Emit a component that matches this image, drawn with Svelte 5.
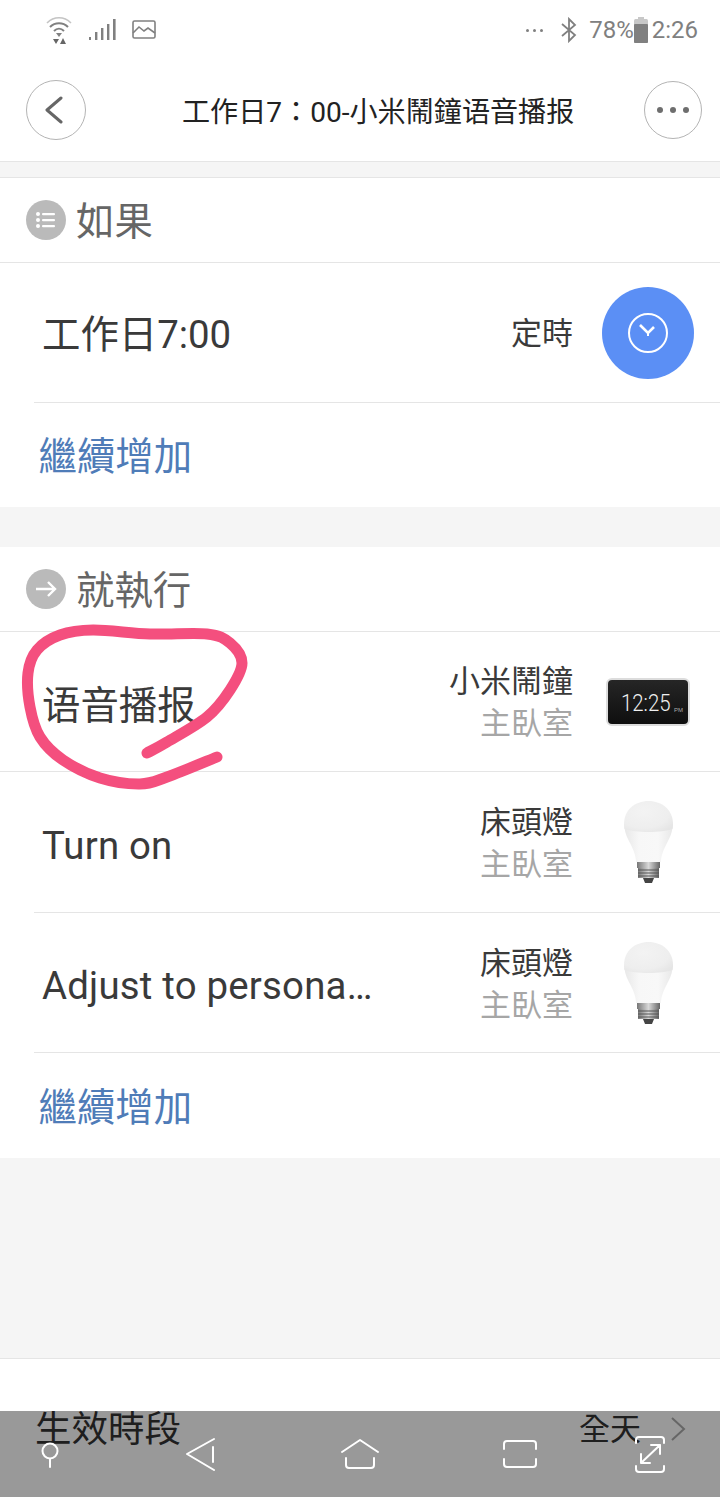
<script>
  // freehand circle drawn over the first action row
  const mark = [
    [147, 753], [167, 742], [207, 717], [230, 690], [242, 663], [230, 643], [207, 634],
    [150, 634], [93, 630], [60, 635], [37, 650], [28, 673], [30, 707], [40, 737],
    [63, 760], [100, 778], [140, 784], [167, 777], [217, 757]
  ]

  function smooth(p) {
    let d = `M${p[0][0]} ${p[0][1]}`
    for (let i = 0; i < p.length - 1; i++) {
      const a = p[Math.max(i - 1, 0)]
      const b = p[i]
      const c = p[i + 1]
      const e = p[Math.min(i + 2, p.length - 1)]
      const x1 = b[0] + (c[0] - a[0]) / 6
      const y1 = b[1] + (c[1] - a[1]) / 6
      const x2 = c[0] - (e[0] - b[0]) / 6
      const y2 = c[1] - (e[1] - b[1]) / 6
      d += ` C${x1} ${y1} ${x2} ${y2} ${c[0]} ${c[1]}`
    }
    return d
  }

  const actions = [
    { name: '语音播报', device: '小米鬧鐘', kind: 'clock' },
    { name: 'Turn on', device: '床頭燈', kind: 'bulb' },
    { name: 'Adjust to persona…', device: '床頭燈', kind: 'bulb' }
  ]
</script>

{#snippet bulb()}
  <svg class="device" width="52" height="84" viewBox="0 0 52 84">
    <defs>
      <radialGradient id="glass" cx="0.4" cy="0.35" r="0.75">
        <stop offset="0" stop-color="#f3f3f3" />
        <stop offset="0.7" stop-color="#eeeeee" />
        <stop offset="1" stop-color="#e5e5e5" />
      </radialGradient>
      <linearGradient id="neck" x1="0" x2="1" y1="0" y2="0">
        <stop offset="0" stop-color="#e8e8e8" />
        <stop offset="0.3" stop-color="#f7f7f7" />
        <stop offset="0.7" stop-color="#f8f8f8" />
        <stop offset="1" stop-color="#e8e8e8" />
      </linearGradient>
      <linearGradient id="metal" x1="0" x2="1" y1="0" y2="0">
        <stop offset="0" stop-color="#777" />
        <stop offset="0.5" stop-color="#d8d8d8" />
        <stop offset="1" stop-color="#666" />
      </linearGradient>
    </defs>
    <path d="M2.5 27 C13 32 40 32 50.5 27 C50 34 47 39 45 43 C42 49 39 55 39 62 H14 C14 55 11 49 8 43 C6 39 3 34 2.5 27 Z" fill="url(#neck)" />
    <path d="M2 24 C2 10 13 1 26.5 1 C40 1 51 10 51 24 C51 26 51 27 50.5 29 C40 33 13 33 2.5 29 C2 27 2 26 2 24 Z" fill="url(#glass)" />
    <rect x="15" y="62" width="23" height="6" fill="url(#metal)" />
    <rect x="16" y="68" width="21" height="10" fill="url(#metal)" />
    <path d="M16 70 H37 M16 73 H37 M16 76 H37" stroke="#555" stroke-width="1" />
    <path d="M21 78 H32 L30 83 H23 Z" fill="#444" />
  </svg>
{/snippet}

{#snippet clock()}
  <svg class="device" width="84" height="48" viewBox="0 0 84 48">
    <defs>
      <linearGradient id="face" x1="0" x2="0" y1="0" y2="1">
        <stop offset="0" stop-color="#262626" />
        <stop offset="1" stop-color="#0e0e0e" />
      </linearGradient>
    </defs>
    <rect x="1" y="1" width="82" height="46" rx="5" fill="url(#face)" stroke="#dcdcdc" stroke-width="2" />
    <text x="15" y="29.1" class="clock-time" transform="scale(1 1.15)">12:25</text>
    <text x="68" y="33.5" class="clock-pm">PM</text>
  </svg>
{/snippet}

<div class="page">
  <div class="top">
    <div class="status">
      <div class="status-left">
        <svg width="30" height="30" viewBox="0 0 30 30" fill="none" stroke="#808080">
          <path d="M3 8 C10 1 20 1 27 8" stroke="#c4c4c4" stroke-width="1.6" />
          <path d="M6 12 C11 7 19 7 24 12" stroke-width="2" />
          <path d="M10 16 C13 13 17 13 20 16" stroke-width="2" />
          <path d="M12 18 L18 18 L15 22 Z" fill="#808080" stroke="none" />
          <path d="M9 24 H15 L12 29 Z M16 29 H22 L19 23 Z" fill="#666" stroke="none" />
        </svg>
        <svg width="28" height="24" viewBox="0 0 28 24" fill="#808080">
          <rect x="0" y="19" width="2" height="3" />
          <rect x="6" y="14" width="2.4" height="8" />
          <rect x="12" y="10" width="2.4" height="12" />
          <rect x="18" y="6" width="2.4" height="16" />
          <rect x="24" y="1" width="2.6" height="21" />
        </svg>
        <svg width="24" height="20" viewBox="0 0 24 20" fill="none" stroke="#808080" stroke-width="1.6">
          <rect x="1" y="1" width="22" height="17" rx="1.5" />
          <path d="M1 13 L7 7 L12 11 L16 8 L23 13" />
        </svg>
      </div>
      <div class="status-right">
        <span class="dots"><i></i><i></i><i></i></span>
        <svg width="18" height="26" viewBox="0 0 18 26" fill="none" stroke="#808080" stroke-width="1.8">
          <path d="M2 7 L15 18 L9 24 V2 L15 8 L2 19" />
        </svg>
        <span class="pct">78%</span>
        <svg width="14" height="26" viewBox="0 0 14 26">
          <rect x="4" y="0" width="6" height="3" fill="#c8c8c8" />
          <rect x="0" y="2" width="14" height="24" rx="1.5" fill="#c8c8c8" />
          <rect x="0" y="7" width="14" height="19" rx="1" fill="#808080" />
        </svg>
        <span class="time">2:26</span>
      </div>
    </div>
    <header>
      <button class="round back" aria-label="back">
        <svg width="20" height="28" viewBox="0 0 20 28" fill="none" stroke="#666" stroke-width="3" stroke-linecap="round" stroke-linejoin="round">
          <path d="M17 2 L3 14 L17 26" />
        </svg>
      </button>
      <div class="title">工作日7：00-小米鬧鐘语音播报</div>
      <button class="round more" aria-label="more">
        <span></span><span></span><span></span>
      </button>
    </header>
  </div>

  <section class="first">
    <div class="head">
      <span class="badge">
        <svg width="20" height="18" viewBox="0 0 20 18" fill="#fff">
          <circle cx="2" cy="3" r="2" /><circle cx="2" cy="9" r="2" /><circle cx="2" cy="15" r="2" />
          <rect x="6" y="2" width="13" height="2.2" rx="1" /><rect x="6" y="8" width="13" height="2.2" rx="1" /><rect x="6" y="14" width="13" height="2.2" rx="1" />
        </svg>
      </span>
      <span class="head-label">如果</span>
    </div>
    <div class="row">
      <div class="name raised">工作日7:00</div>
      <div class="meta"><div>定時</div></div>
      <div class="thumb">
        <span class="timer">
          <svg width="42" height="42" viewBox="0 0 42 42" fill="none" stroke="#fff">
            <circle cx="21" cy="21" r="19" stroke-width="2" />
            <path d="M13 13 L21 21 L27 15" stroke-width="2.6" />
            <path d="M21 20 V24" stroke-width="2" />
          </svg>
        </span>
      </div>
    </div>
    <div class="add">繼續增加</div>
  </section>

  <section class="second">
    <div class="head">
      <span class="badge">
        <svg width="24" height="18" viewBox="0 0 24 18" fill="none" stroke="#fff" stroke-width="2.4">
          <path d="M2 9 H21 M14 2 L21 9 L14 16" />
        </svg>
      </span>
      <span class="head-label">就執行</span>
    </div>
    {#each actions as action, i}
      <div class="row" class:tall={i === 1} class:lamp={action.kind === 'bulb'}>
        <div class="name" class:latin={action.kind === 'bulb'}>{action.name}</div>
        <div class="meta">
          <div>{action.device}</div>
          <div class="room">主臥室</div>
        </div>
        <div class="thumb">
          {#if action.kind === 'clock'}
            {@render clock()}
          {:else}
            {@render bulb()}
          {/if}
        </div>
      </div>
    {/each}
    <div class="add">繼續增加</div>
  </section>

  <section class="bottom">
    <div class="period">生效時段</div>
    <div class="all-day">全天</div>
    <svg class="chevron" width="16" height="26" viewBox="0 0 16 26" fill="none" stroke="#aaa" stroke-width="2">
      <path d="M2 2 L14 13 L2 24" />
    </svg>
  </section>

  <svg class="mark" width="720" height="1497" viewBox="0 0 720 1497" fill="none">
    <path d={smooth(mark)} stroke="#f44f7e" stroke-width="11" stroke-linecap="round" stroke-linejoin="round" />
  </svg>

  <div class="nav">
    <svg width="720" height="86" viewBox="0 1411 720 86" fill="none" stroke="#fff" stroke-width="2" stroke-linecap="round" stroke-linejoin="round">
      <circle cx="50" cy="1451" r="7.5" />
      <path d="M50 1459 V1467" />
      <path d="M214 1439 L187 1454 L214 1470" />
      <path d="M213 1447 V1462" />
      <path d="M342 1452 L360 1440 L378 1452" />
      <path d="M346 1458 V1465 Q346 1468 349 1468 H371 Q374 1468 374 1465 V1458" />
      <path d="M504 1449 V1444 Q504 1441 507 1441 H533 Q536 1441 536 1444 V1449" />
      <path d="M504 1459 V1464 Q504 1467 507 1467 H533 Q536 1467 536 1464 V1459" />
      <path d="M636 1443 V1440 Q636 1437 639 1437 H661 Q664 1437 664 1440 V1443" />
      <path d="M636 1466 V1469 Q636 1472 639 1472 H661 Q664 1472 664 1469 V1466" />
      <path d="M641 1463 L660 1445 M651 1445 H660 V1454 M641 1454 V1463 H650" />
    </svg>
  </div>
</div>

<style>
  :global(body) {
    margin: 0;
    background: #f5f5f5;
  }

  .page {
    position: relative;
    width: 720px;
    height: 1497px;
    overflow: hidden;
    display: flex;
    flex-direction: column;
    background: #f5f5f5;
    font-family: Roboto, "Noto Sans CJK TC", sans-serif;
    color: #3a3a3a;
  }

  .top {
    height: 161px;
    background: #fff;
    border-bottom: 1px solid #e5e5e5;
  }

  .status {
    height: 60px;
    display: flex;
    justify-content: space-between;
    align-items: center;
    color: #808080;
  }

  .status-left {
    display: flex;
    align-items: center;
    gap: 15px;
    padding-left: 44px;
  }

  .status-right {
    display: flex;
    align-items: center;
    padding-right: 22px;
    font-size: 24px;
  }

  .dots {
    display: flex;
    gap: 4px;
    margin-right: 17px;
  }

  .dots i {
    width: 3px;
    height: 3px;
    border-radius: 50%;
    background: #808080;
  }

  .pct {
    margin-left: 11px;
  }

  .time {
    margin-left: 4px;
  }

  header {
    height: 100px;
    display: flex;
    align-items: center;
    padding: 0 18px 0 26px;
  }

  .round {
    flex: none;
    padding: 0;
    background: #fff;
    border: 1px solid #b4b4b4;
    border-radius: 50%;
    display: flex;
    align-items: center;
    justify-content: center;
  }

  .back {
    width: 60px;
    height: 60px;
    padding-right: 4px;
  }

  .more {
    width: 58px;
    height: 58px;
    gap: 7px;
  }

  .more span {
    width: 6px;
    height: 6px;
    border-radius: 50%;
    background: #6e6e6e;
  }

  .title {
    flex: 1;
    padding: 0 0 2px 96px;
    font-size: 28.1px;
    color: #222;
    white-space: nowrap;
  }

  section {
    background: #fff;
  }

  section.first {
    margin-top: 15px;
    border-top: 1px solid #e5e5e5;
  }

  section.second {
    margin-top: 40px;
  }

  .head {
    height: 84px;
    display: flex;
    align-items: center;
    gap: 10px;
    padding-left: 26px;
    font-size: 38.4px;
    color: #666;
    border-bottom: 1px solid #e5e5e5;
  }

  .head-label {
    padding-bottom: 5px;
  }

  .badge {
    width: 40px;
    height: 40px;
    border-radius: 50%;
    background: #bababa;
    display: flex;
    align-items: center;
    justify-content: center;
  }

  .row {
    height: 139px;
    margin-left: 34px;
    border-bottom: 1px solid #e5e5e5;
    display: flex;
    align-items: center;
    padding-left: 8px;
  }

  .row.tall {
    height: 140px;
  }

  .second .row:nth-child(2) {
    margin-left: 0;
    padding-left: 42px;
  }

  .name {
    flex: none;
    font-size: 38.4px;
    white-space: nowrap;
  }

  .name.raised {
    padding-bottom: 4px;
  }

  .name.latin {
    padding-top: 6px;
    letter-spacing: 0.2px;
  }

  .meta {
    flex: 1;
    min-width: 0;
    padding-top: 2px;
    text-align: right;
    font-size: 31px;
    line-height: 42px;
  }

  .lamp .meta {
    padding-top: 4px;
  }

  .room {
    color: #a6a6a6;
  }

  .thumb {
    flex: none;
    box-sizing: border-box;
    width: 147px;
    padding-left: 3px;
    display: flex;
    justify-content: center;
  }

  .device {
    display: block;
  }

  .clock-time {
    font-family: Roboto, sans-serif;
    font-weight: 300;
    font-size: 20.4px;
    fill: #f0f0f0;
  }

  .clock-pm {
    font-family: "Liberation Sans", sans-serif;
    font-size: 6px;
    fill: #aaa;
  }

  .timer {
    width: 92px;
    height: 92px;
    border-radius: 50%;
    background: #5b8ff5;
    display: flex;
    align-items: center;
    justify-content: center;
  }

  .add {
    box-sizing: border-box;
    height: 105px;
    padding: 0 0 4px 38.5px;
    display: flex;
    align-items: center;
    font-size: 38.4px;
    color: #4f7cb8;
  }

  .first .add {
    height: 104px;
  }

  .bottom {
    margin-top: 200px;
    flex: 1;
    border-top: 1px solid #e5e5e5;
    display: flex;
    align-items: flex-start;
    padding-top: 48px;
    padding-left: 35px;
    color: #333;
  }

  .period {
    flex: 1;
    font-size: 36.5px;
    line-height: 46px;
  }

  .all-day {
    font-size: 31px;
    line-height: 46px;
    margin-right: 29px;
  }

  .chevron {
    margin: 9px 34px 0 0;
  }

  .mark {
    position: absolute;
    inset: 0;
    pointer-events: none;
  }

  .nav {
    position: absolute;
    left: 0;
    right: 0;
    bottom: 0;
    height: 86px;
    background: rgba(0, 0, 0, 0.4);
  }

  .nav svg {
    display: block;
  }
</style>
